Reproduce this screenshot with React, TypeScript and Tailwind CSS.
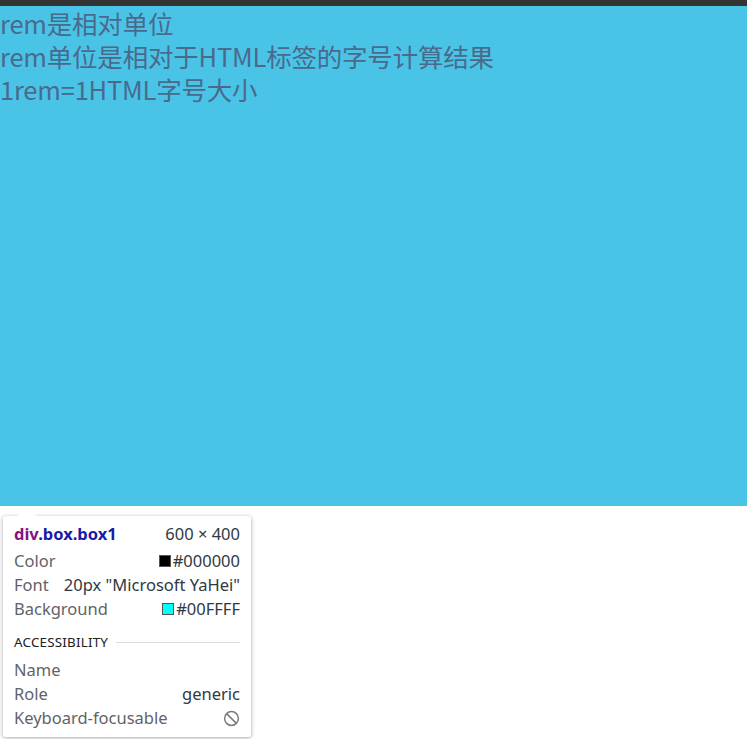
export default function App() {
  const label = "text-[#5f6368]";
  const value = "text-[#303942]";
  return (
    <div className="relative h-[739px] w-[747px] overflow-hidden bg-white font-['Noto_Sans','Noto_Sans_CJK_SC',sans-serif]">
      <div className="h-[6px] bg-[#333333]" />
      <div className="h-[500px] bg-[#49c4e7] text-[25.5px] leading-[33px] tracking-[-0.2px] text-[#4a6a8c] font-['Noto_Sans_CJK_SC',sans-serif]">
        <div>rem是相对单位</div>
        <div>rem单位是相对于HTML标签的字号计算结果</div>
        <div>1rem=1HTML字号大小</div>
      </div>

      {/* devtools inspect tooltip */}
      <div className="absolute left-[3px] top-[516px] w-[248px] rounded-[3px] bg-white px-[11px] pt-[6px] pb-[7px] text-[16.5px] leading-[24px] shadow-[0_1px_4px_rgba(0,0,0,0.35)]">
        <div className="absolute -top-[9px] left-[14px] h-0 w-0 border-x-[10px] border-b-[9px] border-x-transparent border-b-white" />
        <div className="flex justify-between">
          <span className="font-bold">
            <span className="text-[#881280]">div</span>
            <span className="text-[#1a1aa6]">.box.box1</span>
          </span>
          <span className={value}>600 × 400</span>
        </div>
        <div className="mt-[3px] flex justify-between">
          <span className={label}>Color</span>
          <span className={`flex items-center gap-[2px] ${value}`}>
            <span className="h-[12px] w-[12px] border border-[#555] bg-black" />#000000
          </span>
        </div>
        <div className="flex justify-between">
          <span className={label}>Font</span>
          <span className={value}>20px "Microsoft YaHei"</span>
        </div>
        <div className="flex justify-between">
          <span className={label}>Background</span>
          <span className={`flex items-center gap-[2px] ${value}`}>
            <span className="h-[12px] w-[12px] border border-[#555] bg-[#00ffff]" />#00FFFF
          </span>
        </div>
        <div className="mt-[9px] flex items-center gap-[8px]">
          <span className="text-[13.4px] tracking-[0.2px] text-[#202124]">ACCESSIBILITY</span>
          <span className="h-px flex-1 bg-[#dadce0]" />
        </div>
        <div className="mt-[4px] flex justify-between">
          <span className={label}>Name</span>
        </div>
        <div className="flex justify-between">
          <span className={label}>Role</span>
          <span className={value}>generic</span>
        </div>
        <div className="flex items-center justify-between">
          <span className={label}>Keyboard-focusable</span>
          <svg width="17" height="17" viewBox="0 0 16 16" fill="none" stroke="#7a7a7a" strokeWidth="1.4">
            <circle cx="8" cy="8" r="6.5" />
            <line x1="3.4" y1="3.4" x2="12.6" y2="12.6" />
          </svg>
        </div>
      </div>
    </div>
  );
}
